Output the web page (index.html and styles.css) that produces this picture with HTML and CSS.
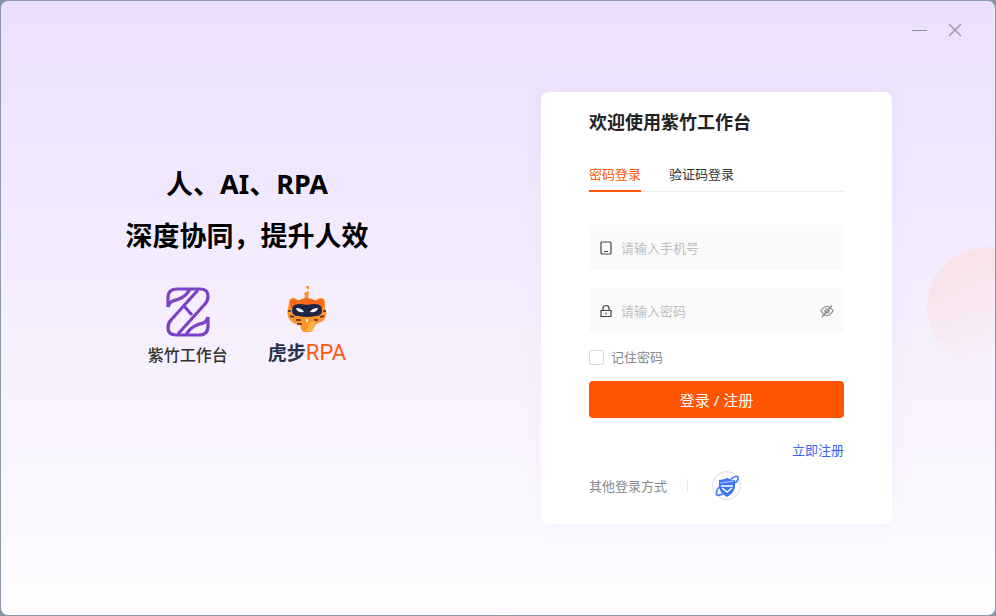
FILE: index.html
```
<!DOCTYPE html>
<html lang="zh-CN">
<head>
    <meta charset="UTF-8">
    <meta name="viewport" content="width=device-width, initial-scale=1">
    <title>紫竹工作台</title>
    <link rel="stylesheet" href="styles.css">
</head>
<body>
    <div class="window">
        <div class="circle"></div>

        <div class="window-controls">
            <button type="button" aria-label="最小化">
                <svg width="16" height="16" viewBox="0 0 16 16"><path d="M1 8.5h15"/></svg>
            </button>
            <button type="button" aria-label="关闭">
                <svg width="16" height="16" viewBox="0 0 16 16"><path d="M2 2l12 12M14 2L2 14"/></svg>
            </button>
        </div>

        <main class="content">
            <section class="intro">
                <h1>人、AI、RPA<br>深度协同，提升人效</h1>
                <div class="brands">
                    <div class="brand">
                        <svg width="44" height="50" viewBox="0 0 44 50" fill="none" stroke="#7a42c8" stroke-width="3.2" stroke-linejoin="round">
                            <path d="M2 20V11Q2 2 11 2H34Q42 2 42 9Q42 14 39 17L12 47"/>
                            <path d="M42 30V39Q42 48 33 48H10Q2 48 2 41Q2 36 5 33L32 3"/>
                            <path d="M2 20C4 13 8 14 13 12C18 10 21 8 24 2"/>
                            <path d="M42 30C40 37 36 36 31 38C26 40 23 42 20 48"/>
                            <path d="M18 19L26 28"/>
                        </svg>
                        <span class="brand-name">紫竹工作台</span>
                    </div>
                    <div class="brand brand-tiger">
                        <svg width="40" height="48" viewBox="0 0 40 48">
                            <path d="M19 1h3v3h-2zM17 8l5-2-1 9h-4l1-4z" fill="#ff8d2c"/>
                            <path d="M2 18q0-5 4-5 3 0 5 2h18q2-2 5-2 4 0 4 5v5q2 4 1 8-1 4-5 6l-5 2-4 7q-1 1-3 1h-5q-2 0-3-3l-1-4q-7-1-10-5-4-5-2-12z" fill="#ff9426"/>
                            <path d="M3 18q0-4 4-4l4 2q4-3 9-3t9 3l4-2q4 0 4 4l-1 5H4z" fill="#f9661b"/>
                            <path d="M22 38l7-2-3 8q-1 2-3 2h-5l3-3z" fill="#ffb646"/>
                            <path d="M5 25q0-6 7-6 4 0 8 1 4-1 8-1 7 0 7 6t-6 6q-5 1-9 1t-9-1q-6 0-6-6z" fill="#1f2644"/>
                            <path d="M9 23q6 0 8 4-7 1-8-4zM31 23q-6 0-8 4 7 1 8-4z" fill="#fff"/>
                            <path d="M1 26h3M39 26h-3M3 31l4 1M37 31l-4 1M9 35h5M31 35h-4M10 39h5" fill="none" stroke="#3a2a38" stroke-width="1.3"/>
                            <path d="M19 34h2v3h-2z" fill="#fff1d6"/>
                        </svg>
                        <span class="brand-name">虎步<span>RPA</span></span>
                    </div>
                </div>
            </section>

            <form class="card">
                <h2>欢迎使用紫竹工作台</h2>

                <div class="tabs" role="tablist">
                    <button type="button" class="tab active" role="tab" aria-selected="true">密码登录</button>
                    <button type="button" class="tab" role="tab" aria-selected="false">验证码登录</button>
                </div>

                <div class="field">
                    <label for="phone" aria-label="手机号">
                        <svg width="14" height="14" viewBox="0 0 14 14"><rect x="2" y="1" width="10" height="12" rx="1"/><path d="M5 10.5h4"/></svg>
                    </label>
                    <input type="tel" id="phone" placeholder="请输入手机号">
                </div>

                <div class="field">
                    <label for="password" aria-label="密码">
                        <svg width="14" height="14" viewBox="0 0 14 14"><path d="M2 6.5h10v6H2zM4 6V4q0-2.5 3-2.5T10 4v2M7 8.5v2"/></svg>
                    </label>
                    <input type="password" id="password" placeholder="请输入密码">
                    <button type="button" class="eye" aria-label="显示密码">
                        <svg width="14" height="14" viewBox="0 0 14 14"><path d="M1 7q2.5-4.5 6-4.5T13 7q-2.5 4.5-6 4.5T1 7zM12 1.5L2 13"/><circle cx="7" cy="7" r="2"/></svg>
                    </button>
                </div>

                <div class="remember">
                    <input type="checkbox" id="remember">
                    <label for="remember">记住密码</label>
                </div>

                <button type="submit" class="submit">登录 / 注册</button>

                <a href="#" class="register">立即注册</a>

                <div class="other">
                    <span>其他登录方式</span>
                    <span class="divider"></span>
                    <a href="#" class="shield" aria-label="其他登录方式">
                        <svg width="24" height="24" viewBox="0 0 24 24">
                            <path d="M4 6q4 0 8-2 4 2 8 2v7q-1 6-8 10-7-4-8-10z" fill="#3b74f6"/>
                            <path d="M5 9q7-1 14-2" fill="none" stroke="#8fb0fb" stroke-width="1.4"/>
                            <path d="M6 12h12M7 14l5 4 5-4" fill="none" stroke="#fff" stroke-width="1.5"/>
                            <path d="M4 13q-4 5-2 8 3 1 7-2M16 5q5-4 7-2 1 3-3 6" fill="none" stroke="#4f83f8" stroke-width="1.8"/>
                        </svg>
                    </a>
                </div>
            </form>
        </main>
    </div>
</body>
</html>
```
FILE: styles.css
```
* {
    box-sizing: border-box;
}

body {
    margin: 0;
    background-color: #80979f;
    font-family: "Noto Sans", "Noto Sans CJK SC", sans-serif;
    font-size: 13px;
    line-height: 20px;
    color: #333;
}

button,
input {
    font: inherit;
    border: none;
    background: none;
    padding: 0;
    margin: 0;
    outline: none;
}

button {
    cursor: pointer;
}

a {
    color: #3c62f5;
    text-decoration: none;
}

svg {
    display: block;
}

/* App window */
.window {
    position: relative;
    display: flex;
    min-height: 100vh;
    border: 1px solid #8e9aa8;
    border-radius: 8px;
    overflow: hidden;
    background: linear-gradient(#ecdffd, #f5eefe 50%, #fefdfe);
}

.circle {
    position: absolute;
    top: 40%;
    right: -52px;
    width: 120px;
    height: 120px;
    border-radius: 50%;
    background: linear-gradient(155deg, #f7e3ea 20%, #f7eaf4 55%, #f8f2fe 85%);
}

.window-controls {
    position: absolute;
    top: 21px;
    right: 32px;
    z-index: 1;
    display: flex;
    gap: 20px;
}

.window-controls svg {
    fill: none;
    stroke: #949099;
    stroke-width: 1.2;
}

.content {
    position: relative;
    flex: 1;
    display: grid;
    grid-template-columns: 1fr 351px;
    gap: 48px;
    align-items: center;
    padding-right: 103px;
}

/* Left side */
.intro {
    padding-bottom: 94px;
    text-align: center;
}

h1 {
    margin: 0 0 25px;
    font-size: 27px;
    line-height: 52px;
    font-weight: bold;
    color: #000;
}

.brands {
    display: flex;
    justify-content: center;
    gap: 40px;
}

.brand {
    display: flex;
    flex-direction: column;
    align-items: center;
    gap: 8px;
}

.brand-name {
    font-size: 16px;
    line-height: 20px;
    font-weight: 500;
}

.brand-tiger {
    gap: 10px;
    margin-top: -2px;
}

.brand-tiger .brand-name {
    font-size: 19px;
    font-weight: bold;
    color: #2b3150;
}

.brand-tiger .brand-name span {
    font-family: "Roboto", sans-serif;
    font-size: 22px;
    font-weight: normal;
    color: #ff5a10;
}

/* Login card */
.card {
    display: flex;
    flex-direction: column;
    padding: 16px 48px 24px;
    border-radius: 8px;
    background-color: #fff;
    box-shadow: 0 0 24px rgba(160, 120, 210, 0.06);
}

h2 {
    margin: 0 0 28px;
    font-size: 18px;
    line-height: 28px;
    color: #222;
}

.tabs {
    display: flex;
    gap: 28px;
    margin-bottom: 33px;
    box-shadow: inset 0 -1px #eee;
}

.tab {
    padding-bottom: 6px;
    border-bottom: 2px solid transparent;
    color: #333;
}

.tab.active {
    border-color: #ff5500;
    color: #ff5500;
}

.field {
    display: flex;
    align-items: center;
    gap: 8px;
    height: 45px;
    margin-bottom: 18px;
    padding: 0 10px;
    border-radius: 2px;
    background-color: #fafafa;
}

.field svg {
    fill: none;
    stroke: #444;
    stroke-width: 1.2;
}

.field input {
    flex: 1;
    min-width: 0;
}

.field input::placeholder {
    color: #bfbfbf;
}

.field .eye svg {
    stroke: #888;
}

.remember {
    display: flex;
    align-items: center;
    gap: 7px;
    margin: -4px 0 14px;
    color: #888;
}

.remember input {
    appearance: none;
    width: 15px;
    height: 15px;
    border: 1px solid #d9d9d9;
    border-radius: 2px;
    background-color: #fff;
}

.remember input:checked {
    background-color: #ff5500;
}

.submit {
    height: 37px;
    border-radius: 4px;
    background-color: #ff5500;
    color: #fff;
    font-size: 15px;
}

.submit:hover {
    background-color: #ff6a1f;
}

.register {
    align-self: flex-end;
    margin: 22px 0 11px;
}

.other {
    display: flex;
    align-items: center;
    color: #888;
}

.divider {
    width: 1px;
    height: 13px;
    margin: 0 24px 0 20px;
    background-color: #e8e8e8;
}

.shield {
    display: flex;
    align-items: center;
    justify-content: center;
    width: 29px;
    height: 29px;
    border: 1px solid #ddd;
    border-radius: 50%;
}
```
